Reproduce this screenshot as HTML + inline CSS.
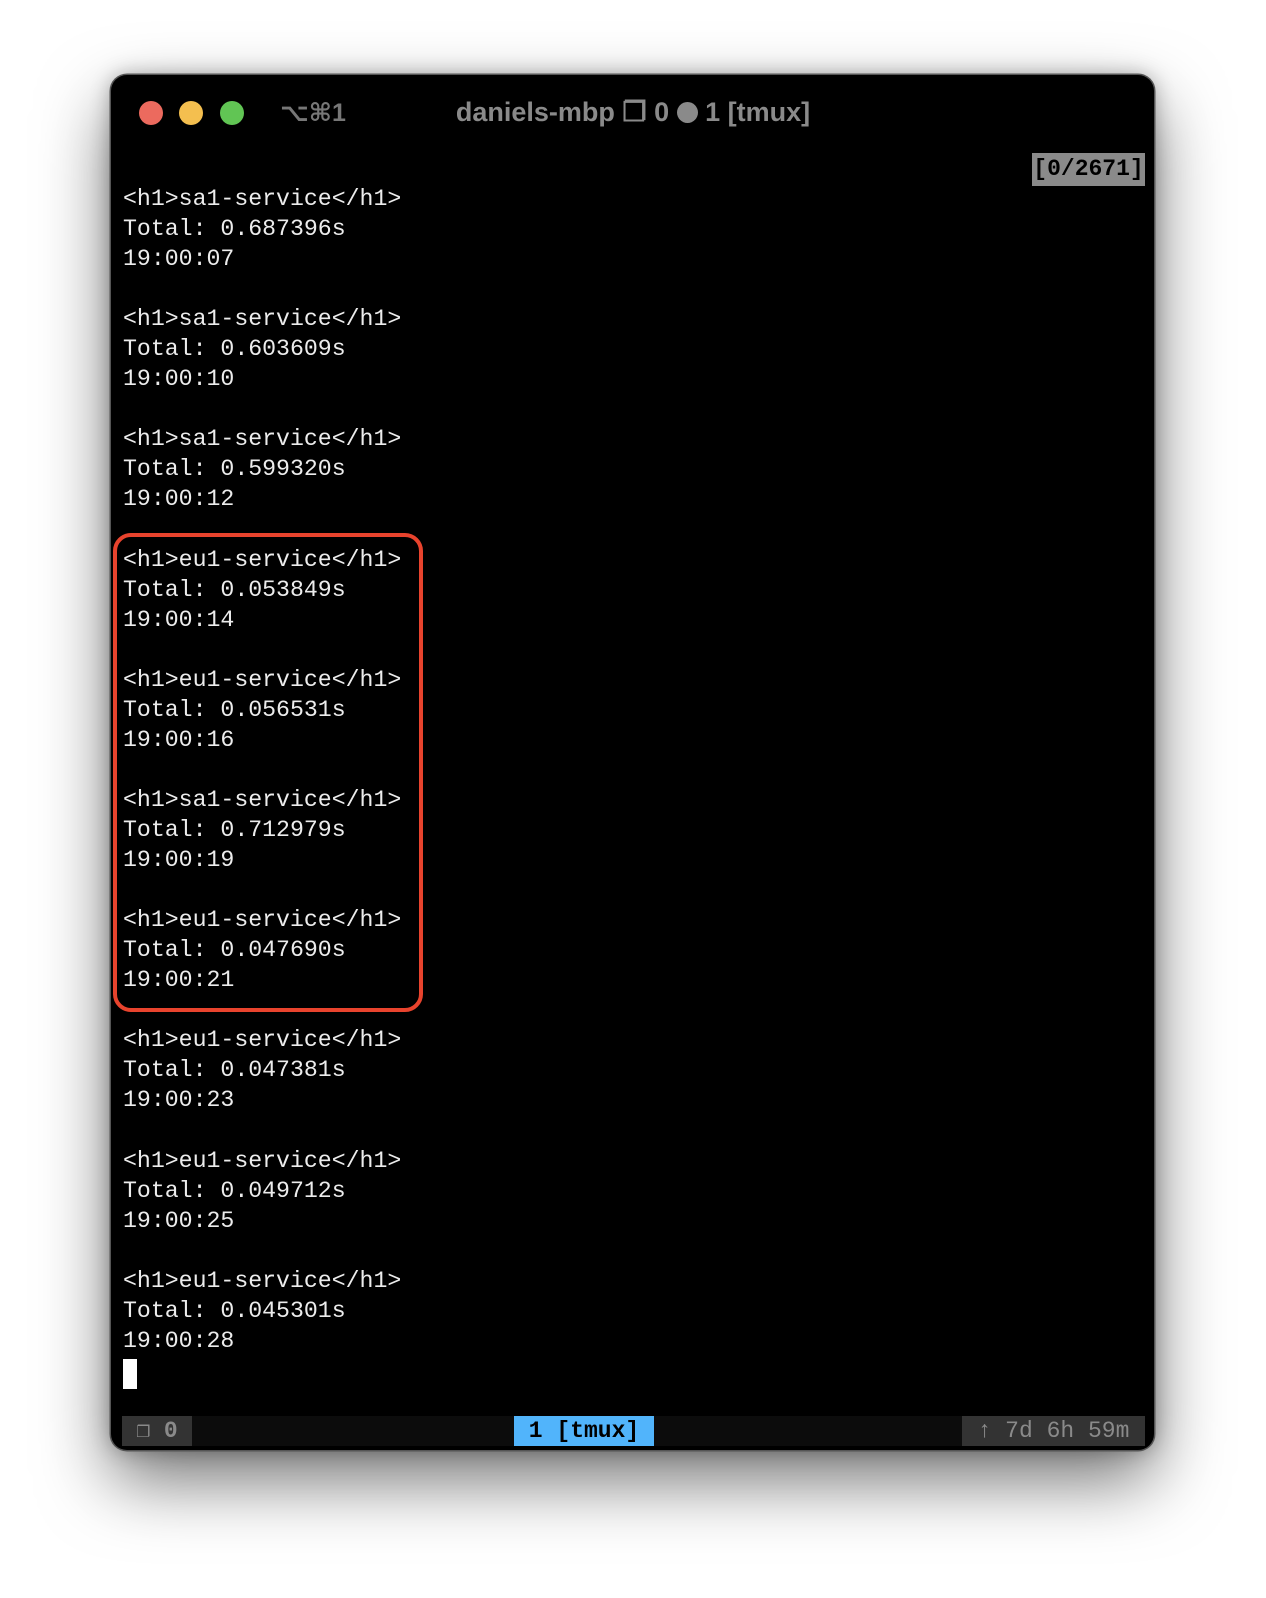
<!DOCTYPE html>
<html><head><meta charset="utf-8"><style>
html,body{margin:0;padding:0;}
body{width:1266px;height:1598px;background:#fff;position:relative;overflow:hidden;}
.win{position:absolute;left:111px;top:75px;width:1043px;height:1375px;background:#000;border-radius:16px;box-shadow:0 0 0 1.5px #555,0 30px 70px rgba(0,0,0,.55),0 0 20px rgba(0,0,0,.3);overflow:hidden;}
.dot{position:absolute;top:101px;width:24px;height:24px;border-radius:50%;}
.title{position:absolute;top:97px;left:0;width:1266px;text-align:center;font:bold 27px "Liberation Sans",sans-serif;color:#8a8a8a;}
.title .c{display:inline-block;width:21px;height:21px;border-radius:50%;background:#8a8a8a;vertical-align:-2px;}
.kbd{position:absolute;left:280px;top:98px;font:bold 25px "Liberation Sans","DejaVu Sans",sans-serif;color:#777;}
.term{position:absolute;left:123px;top:184px;font:23.2px/30.05px "Liberation Mono",monospace;color:#ececec;white-space:pre;}
.cnt{position:absolute;left:1032px;top:153px;width:113px;height:33px;background:#8a8a8a;color:#000;font:bold 23px/33px "Liberation Mono",monospace;text-align:center;}
.cursor{position:absolute;left:123px;top:1359px;width:14px;height:30px;background:#fff;}
.bar{position:absolute;left:122px;top:1416px;width:1023px;height:30px;background:#0c0c0c;font:23px/30px "Liberation Mono","DejaVu Sans Mono",monospace;}
.bar div{position:absolute;top:0;height:30px;}
.red{position:absolute;left:113px;top:533px;width:302px;height:471px;border:4px solid #e8432d;border-radius:18px;}
</style></head><body>
<div class="win"></div>
<div class="dot" style="left:139px;background:#ec6a5e;"></div>
<div class="dot" style="left:179px;background:#f4bf4f;"></div>
<div class="dot" style="left:220px;background:#61c554;"></div>
<div class="kbd">⌥⌘1</div>
<div class="title">daniels-mbp ❐ 0 <span class="c"></span> 1 [tmux]</div>
<div class="cnt">[0/2671]</div>
<div class="term">&lt;h1&gt;sa1-service&lt;/h1&gt;
Total: 0.687396s
19:00:07

&lt;h1&gt;sa1-service&lt;/h1&gt;
Total: 0.603609s
19:00:10

&lt;h1&gt;sa1-service&lt;/h1&gt;
Total: 0.599320s
19:00:12

&lt;h1&gt;eu1-service&lt;/h1&gt;
Total: 0.053849s
19:00:14

&lt;h1&gt;eu1-service&lt;/h1&gt;
Total: 0.056531s
19:00:16

&lt;h1&gt;sa1-service&lt;/h1&gt;
Total: 0.712979s
19:00:19

&lt;h1&gt;eu1-service&lt;/h1&gt;
Total: 0.047690s
19:00:21

&lt;h1&gt;eu1-service&lt;/h1&gt;
Total: 0.047381s
19:00:23

&lt;h1&gt;eu1-service&lt;/h1&gt;
Total: 0.049712s
19:00:25

&lt;h1&gt;eu1-service&lt;/h1&gt;
Total: 0.045301s
19:00:28</div>
<div class="cursor"></div>
<div class="red"></div>
<div class="bar">
<div style="left:0;width:70px;background:#333;color:#8a8a8a;text-align:center;font-weight:bold;">❐ 0</div>
<div style="left:392px;width:140px;background:#51b4fb;color:#000;text-align:center;font-weight:bold;">1 [tmux]</div>
<div style="left:840px;width:183px;background:#333;color:#8a8a8a;text-align:center;">↑ 7d 6h 59m</div>
</div>
</body></html>
